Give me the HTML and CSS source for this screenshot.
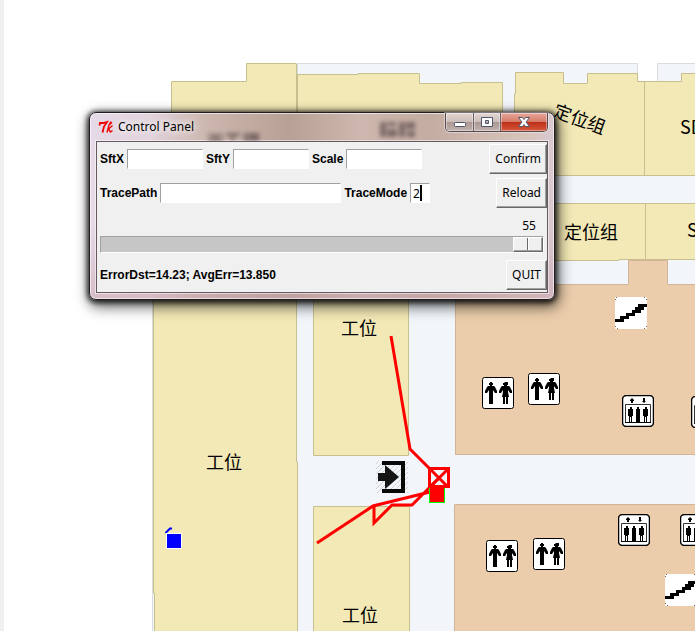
FILE: index.html
```html
<!DOCTYPE html>
<html lang="zh-CN">
<head>
<meta charset="utf-8">
<title>Control Panel</title>
<link rel="stylesheet" href="styles.css">
</head>
<body>
<main class="workspace">
  <svg class="map" role="img" aria-label="Floor map">
    <defs>
      <symbol id="restroom" viewBox="0 0 32 32">
        <rect x=".5" y=".5" width="31" height="31" rx="2" fill="#fff" stroke="#000"/>
        <path d="M8 5h2v1h1v2h-1v1h2l1 1 2 4v2h-2l-2-3v14H7V13l-2 3H3v-2l2-4 1-1h2V8H7V6h1z"/>
        <path d="M23 5h3v3h-1v1h2l1 1 2 4v2h-2l-2-3v2l1 5h-1v7h-2v-7h-1v7h-2v-7h-1l1-5v-2l-2 3h-2v-2l2-4 1-1h2V8h-1V6h1z"/>
      </symbol>
      <symbol id="elevator" viewBox="0 0 32 32">
        <rect x=".5" y=".5" width="31" height="31" rx="4" fill="#fff" stroke="#000" stroke-width="1.5"/>
        <path d="M10 3l2 2v1h-1v2H9V6H8V5zM21 3h2v3h1l-2 2-2-2h1z"/>
        <path d="M3.500 28V9.500h25V28" fill="none" stroke="#333"/>
        <path d="M3 27h26v1H3z"/>
        <path d="M8 12h2v2h1v7h-1v7H9v-6H8v6H7v-7H6v-7h2zM15 12h2v2h1v14h-4V14h1zM23 12h2v2h1v7h-1v7h-1v-6h-1v6h-1v-7h-1v-7h2z"/>
      </symbol>
      <symbol id="stairs" viewBox="0 0 32 32">
        <rect width="32" height="32" rx="1" fill="#fff"/>
        <path d="M0 22h5v-3h6v-3h6v-3h3v-3h3V7h9v3h-3v3h-3v3h-6v3h-6v3H9v3H0z"/>
        <path d="M1 0h1v1H1zM0 2h1v1H0zM29 0h1v1h-1zM31 2h1v1h-1zM0 29h1v1H0zM2 31h1v1H2zM31 29h1v1h-1zM29 31h1v1h-1z" fill="#776655"/>
      </symbol>
      <pattern id="hatch" width="5" height="5" patternUnits="userSpaceOnUse">
        <path d="M0 5L5 0" stroke="#cfd2d4" fill="none"/>
      </pattern>
      <filter id="frost" x="-20%" y="-50%" width="140%" height="200%">
        <feGaussianBlur stdDeviation="2"/>
      </filter>
    </defs>

    <path class="floor" d="M152.500 1400V120H297.500V63.500H637.500V81.500H657.500V63.500H2400V1400z"/>
    <path class="room" d="M154.500 1400V593H153.500V275H152.500V170H171.500V81.500H246.500V63.500H296.500V462H297.500V1400z"/>
    <path class="room" d="M297.500 74.500H358V73.500H419.500V83.500H461V82.500H502.500V175.500H297.500z"/>
    <path class="room" d="M514.500 175.500V94H515.500V72.500H563.500V83.500H587.500V73.500H637.500V81.500H681.500V73.500H2400V175.500z"/>
    <path class="room" d="M514.500 203.500H2400V259.500H619V260.500H514.500z"/>
    <path class="edge" d="M644.500 81V175M645.500 203V259"/>
    <path class="room" d="M313.500 250V455.500H408.500V250zM313.500 1400V506.500H409.500V1400z"/>
    <path class="hall" d="M455.500 284.500H628.500V260.500H667.500V284.500H2400V454.500H455.500zM454.500 504.500H2400V1400H454.500z"/>

    <text class="place" x="341" y="335">工位</text>
    <text class="place" x="206" y="469">工位</text>
    <text class="place" x="342" y="622">工位</text>
    <text class="place" x="564" y="239">定位组</text>
    <text class="place" transform="translate(552 116) rotate(20)">定位组</text>
    <text class="place" x="680" y="134">SD</text>
    <text class="place" x="687" y="237">S</text>

    <use href="#stairs" x="615" y="297" width="32" height="32"/>
    <use href="#stairs" x="665" y="574" width="32" height="32"/>
    <use href="#restroom" x="482" y="377" width="32" height="32"/>
    <use href="#restroom" x="528" y="373" width="32" height="32"/>
    <use href="#restroom" x="486" y="540" width="32" height="32"/>
    <use href="#restroom" x="533" y="538" width="32" height="32"/>
    <use href="#elevator" x="622" y="395" width="32" height="32"/>
    <use href="#elevator" x="691" y="396" width="32" height="32"/>
    <use href="#elevator" x="618" y="514" width="32" height="32"/>
    <use href="#elevator" x="680" y="514" width="32" height="32"/>

    <rect x="376" y="461" width="32" height="32" fill="url(#hatch)"/>
    <path d="M382 461H405V493H382V489H401V465H382z" fill="#080808"/>
    <path d="M378 473H385V465L399 477L385 489V481H378z" fill="#151515"/>

    <path class="trace" d="M391 336L410 449L429 468M317 543L373 506L434 491M439 478L412 505H392L374 523V505"/>
    <rect x="429.500" y="487.500" width="15" height="15" fill="#f00" stroke="#0f0"/>
    <path class="trace" d="M429.500 468.500H448.500V486.500H429.500zM430 469L448 487M448 469L430 487"/>
    <path d="M165.500 533L170 528.500H172" fill="none" stroke="#00f" stroke-width="2"/>
    <rect x="166.500" y="533.500" width="15" height="15" fill="#00f" stroke="#fff"/>
  </svg>

  <section class="window" aria-labelledby="window-title">
    <header class="titlebar">
      <svg class="logo" width="16" height="14" viewBox="0 0 16 14" aria-hidden="true">
        <path d="M1.500 5.500L2 3H5L9 2 6 6.500 4.500 12.500" fill="none" stroke="#f00000" stroke-width="1.800"/>
        <path d="M13 1.500L11 5 9 12.500M14.500 5.500L10.500 9 12.500 12 14.500 10.500M11 5L14 2.500" fill="none" stroke="#f00000" stroke-width="1.400"/>
      </svg>
      <h1 class="title" id="window-title">Control Panel</h1>
      <div class="window-buttons">
        <button class="glass" type="button" aria-label="Minimize">
          <svg width="14" height="12" viewBox="0 0 14 12"><rect x="1.500" y="6.500" width="11" height="4" rx="1" fill="#fff" stroke="#51576a"/></svg>
        </button>
        <button class="glass" type="button" aria-label="Maximize">
          <svg width="14" height="12" viewBox="0 0 14 12"><path d="M1.500 1.500h11v9h-11zM5.500 4.500v3h3v-3z" fill="#fff" fill-rule="evenodd" stroke="#51576a"/></svg>
        </button>
        <button class="glass close" type="button" aria-label="Close">
          <svg width="14" height="12" viewBox="0 0 14 12"><path d="M1.500 1.500h4L7 3.500 8.500 1.500h4L9 6l3.500 4.500h-4L7 8.500 5.500 10.500h-4L5 6z" fill="#fff" stroke="#51576a"/></svg>
        </button>
      </div>
      <svg class="behind" width="452" height="28" aria-hidden="true">
        <g filter="url(#frost)" fill="#4c3c40" opacity=".6">
          <path d="M112 21h15v2h-15zM112 25h15v3h-15zM118 21h3v7h-3zM130 20h14v3h-14zM135 20h3v8h-3zM148 20h4v8h-4zM153 20h10v8h-10z"/>
          <path d="M284 9h6v15h-6zM291 9h9v4h-9zM291 16h10v8h-10zM303 9h6v15h-6zM310 9h9v7h-9zM311 18h8v6h-8z"/>
        </g>
      </svg>
    </header>
    <form class="client">
      <div class="row">
        <label for="sftx">SftX</label><input class="entry" id="sftx" type="text">
        <label for="sfty">SftY</label><input class="entry" id="sfty" type="text">
        <label for="scale">Scale</label><input class="entry" id="scale" type="text">
        <button class="push" type="button">Confirm</button>
      </div>
      <div class="row">
        <label for="path">TracePath</label><input class="entry long" id="path" type="text">
        <label for="mode">TraceMode</label><span class="focused"><input class="entry short" id="mode" type="text" value="2"></span>
        <button class="push" type="button">Reload</button>
      </div>
      <div class="scale">
        <output class="reading" for="frame">55</output>
        <input class="slider" id="frame" type="range" min="0" max="55" value="55" aria-label="Frame">
      </div>
      <div class="row">
        <p class="status">ErrorDst=14.23; AvgErr=13.850</p>
        <button class="push" type="button">QUIT</button>
      </div>
    </form>
  </section>
</main>
</body>
</html>
```
FILE: styles.css
```css
* { box-sizing: border-box; }

body {
  margin: 0;
  background: #fff;
  font: 12px/16px "Noto Sans", "Open Sans", sans-serif;
  color: #000;
}

.workspace {
  position: relative;
  min-height: 100vh;
  border-left: 4px solid #f0f0f0;
  overflow: hidden;
}

/* Map canvas, measured from the left edge of the screen */
.map {
  position: absolute;
  top: 0;
  left: -4px;
  width: calc(100% + 4px);
  height: 100%;
  clip-path: inset(0 0 0 4px);
}
.floor { fill: #f2f6fa; stroke: #d9dde0; }
.room { fill: #f3e9b6; stroke: #c8bf8e; }
.edge { fill: none; stroke: #c8bf8e; }
.hall { fill: #ebcdab; stroke: #d3b496; }
.place { font: 400 18px "Noto Sans CJK SC", sans-serif; }
.trace { fill: none; stroke: #f00; stroke-width: 3; }

/* Floating window */
.window {
  position: absolute;
  top: 112px;
  left: 85px;
  width: 466px;
  padding: 0 6px 6px;
  border: 1px solid #201c20;
  border-radius: 7px;
  background:
    linear-gradient(to bottom, transparent 60%, #c9a0aa80),
    linear-gradient(to right, #e6dae8 0, #e2d3dc 60px, #cbb5ac 120px, #b8a096 200px, #ceb7ae 270px, #c4aca2 340px, #d8c5bd 440px, #d9c8d0);
  box-shadow: inset 0 0 0 1px #fff9, 0 1px 5px 2px #000b, 2px 5px 14px 2px #0009;
}

.titlebar {
  position: relative;
  display: flex;
  align-items: center;
  height: 28px;
}
.behind {
  position: absolute;
  top: 0;
  left: 0;
  pointer-events: none;
}
.logo { margin-left: 2px; }
.title {
  margin: 0 0 0 4px;
  font-size: 12px;
  font-weight: 400;
  text-shadow: 0 0 6px #fff, 0 0 10px #fff;
}
.window-buttons {
  display: flex;
  align-self: flex-start;
  margin-left: auto;
  border: 1px solid #554a50;
  border-top: 0;
  border-radius: 0 0 5px 5px;
  overflow: hidden;
  box-shadow: 0 0 0 1px #fff6;
}
.glass {
  display: flex;
  align-items: center;
  justify-content: center;
  width: 27px;
  height: 18px;
  padding: 0;
  border: 0;
  background: linear-gradient(#e2d6d3, #cdbeba 48%, #a89793 50%, #c3b3af);
  box-shadow: inset 0 0 0 1px #fff6;
}
.glass + .glass { border-left: 1px solid #6d6064; }
.glass.close {
  width: 47px;
  background: linear-gradient(#e7a99d, #d77b68 48%, #bd2f18 50%, #d6573a);
}

.client {
  display: flex;
  flex-direction: column;
  padding: 2px 0;
  border: 1px solid #655a60;
  background: #f0f0f0;
  box-shadow: 0 0 0 1px #fff8;
}
.row {
  display: flex;
  align-items: center;
  padding-left: 3px;
}
.row + .row { margin-top: 4px; }
.row label,
.status {
  margin: 0;
  font-family: "Liberation Sans", Arial, sans-serif;
  font-weight: 700;
}
.entry {
  width: 76px;
  height: 20px;
  margin: 0 3px;
  padding: 0 2px;
  border: 1px solid;
  border-color: #a0a0a0 #fff #fff #a0a0a0;
  background: #fff;
  font: inherit;
}
.entry.long { width: 181px; }
.entry.short { width: 20px; }
.focused { position: relative; }
.focused::after {
  content: "";
  position: absolute;
  top: 2px;
  left: 13px;
  width: 2px;
  height: 16px;
  background: #000;
}
.push {
  height: 30px;
  margin-left: auto;
  padding: 0 5px;
  border: 1px solid;
  border-color: #fff #696969 #696969 #fff;
  background: #f0f0f0;
  box-shadow: inset -1px -1px #a0a0a0;
  font: inherit;
}

.scale {
  display: flex;
  flex-direction: column;
  padding: 8px 3px 7px;
}
.reading {
  align-self: flex-end;
  width: 30px;
  line-height: 20px;
  text-align: center;
}
.slider {
  appearance: none;
  width: 100%;
  height: 17px;
  margin: 0;
  border: 1px solid;
  border-color: #a0a0a0 #fff #fff #a0a0a0;
  background: #c6c6c6;
}
.slider::-webkit-slider-thumb {
  appearance: none;
  width: 30px;
  height: 15px;
  border: 1px solid;
  border-color: #fff #696969 #696969 #fff;
  background: linear-gradient(to right, #f0f0f0 13px, #696969 13px, #696969 14px, #fff 14px, #fff 15px, #f0f0f0 15px);
  box-shadow: inset -1px -1px #a0a0a0;
}
```
